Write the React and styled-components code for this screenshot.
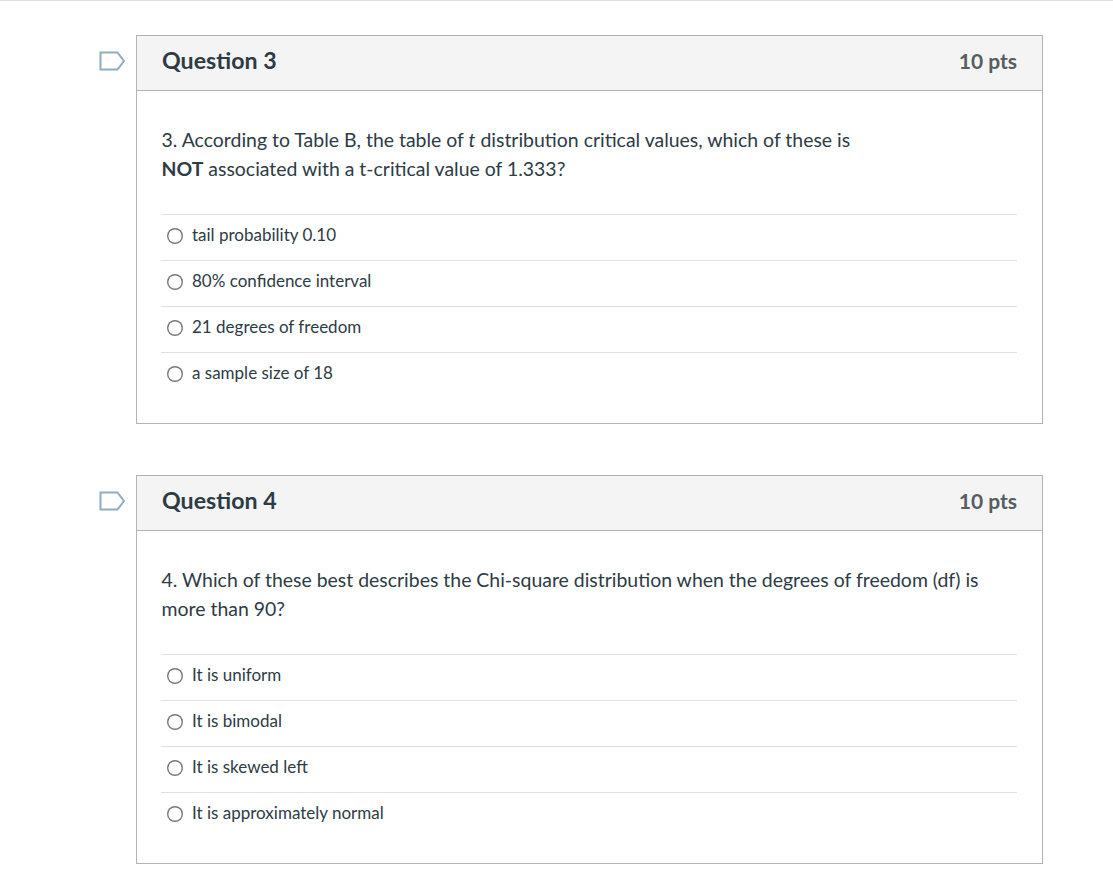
import React from 'react';
import styled, { createGlobalStyle } from 'styled-components';

const GlobalStyle = createGlobalStyle`
  html, body {
    margin: 0;
    padding: 0;
    background: #fff;
  }
  body {
    font-family: Lato, "Liberation Sans", sans-serif;
    color: #2d3b45;
    font-variant-ligatures: common-ligatures;
  }
`;

const Page = styled.div`
  width: 1113px;
  height: 896px;
  box-sizing: border-box;
  border-top: 1px solid #dcdee0;
  padding: 34px 0 0 136px;
  overflow: hidden;
`;

const QuestionRow = styled.div`
  position: relative;
  width: 907px;
  margin-bottom: 51px;
`;

const Flag = styled.svg`
  position: absolute;
  left: -37px;
  top: 15px;
  width: 26px;
  height: 22px;
`;

const Card = styled.section`
  border: 1px solid #b4b4b4;
  height: 389px;
  box-sizing: border-box;
`;

const Header = styled.header`
  display: flex;
  justify-content: space-between;
  align-items: center;
  height: 55px;
  box-sizing: border-box;
  padding: 0 25px 6px 25px;
  background: #f4f4f4;
  border-bottom: 1px solid #b4b4b4;
`;

const Title = styled.h2`
  margin: 0;
  font-size: 23.2px;
  font-weight: 700;
  color: #2d3b45;
`;

const Points = styled.span`
  font-size: 21px;
  font-weight: 700;
  color: #565d63;
`;

const Body = styled.div`
  padding: 34px 25px 0 24px;
`;

const Prompt = styled.p`
  margin: 0 0 31px 0.5px;
  font-size: 19.45px;
  line-height: 29px;
`;

const Answer = styled.label`
  display: flex;
  align-items: center;
  height: 39.1px;
  padding-bottom: 6px;
  border-top: 1px solid #dfdfdf;
  font-size: 17px;
`;

const Radio = styled.span`
  width: 16px;
  height: 16px;
  margin: 3px 9px 0 6px;
  border-radius: 50%;
  box-shadow: inset 0 0 0 1.4px #757a7e;
  flex: none;
`;

const questions = [
  {
    title: 'Question 3',
    prompt: (
      <>
        3. According to Table B, the table of <em>t</em> distribution critical values, which of these is
        <br />
        <strong>NOT</strong> associated with a t-critical value of 1.333?
      </>
    ),
    answers: ['tail probability 0.10', '80% confidence interval', '21 degrees of freedom', 'a sample size of 18'],
  },
  {
    title: 'Question 4',
    prompt: '4. Which of these best describes the Chi-square distribution when the degrees of freedom (df) is more than 90?',
    answers: ['It is uniform', 'It is bimodal', 'It is skewed left', 'It is approximately normal'],
  },
];

export default function App() {
  return (
    <Page>
      <GlobalStyle />
      {questions.map((q) => (
        <QuestionRow key={q.title}>
          <Flag viewBox="0 0 26 22" aria-hidden="true">
            <path d="M1.5 2.5H18.5L25 11L18.5 19.5H1.5Z" fill="none" stroke="#8fabc0" strokeWidth="2" />
          </Flag>
          <Card>
            <Header>
              <Title>{q.title}</Title>
              <Points>10 pts</Points>
            </Header>
            <Body>
              <Prompt>{q.prompt}</Prompt>
              {q.answers.map((a) => (
                <Answer key={a}>
                  <Radio />
                  {a}
                </Answer>
              ))}
            </Body>
          </Card>
        </QuestionRow>
      ))}
    </Page>
  );
}
